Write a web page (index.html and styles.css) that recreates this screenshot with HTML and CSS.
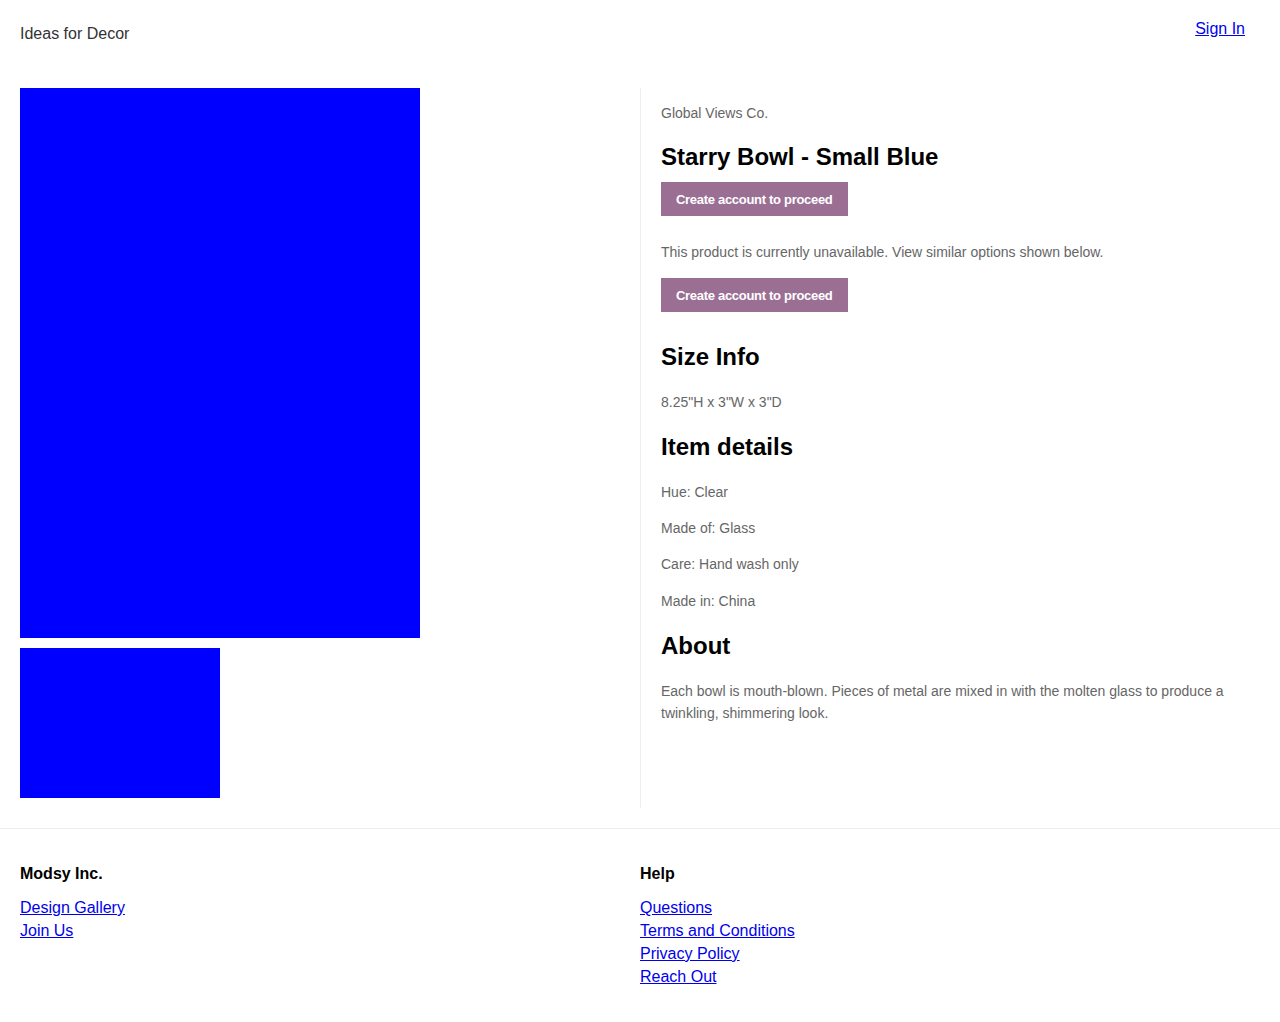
FILE: index.html
```html
<!DOCTYPE html>
<html lang="en">
<head>
<meta charset="utf-8">
<title>Starry Bowl - Small Blue</title>
<link rel="stylesheet" href="styles.css">
</head>
<body>
<header class="site-header">
  <div class="brand-name">Ideas for Decor</div>
  <a class="sign-in" href="#">Sign In</a>
</header>
<main class="product">
  <section class="gallery">
    <div class="main-image"></div>
    <div class="thumb"></div>
  </section>
  <section class="info">
    <p class="vendor">Global Views Co.</p>
    <h1 class="title">Starry Bowl - Small Blue</h1>
    <button class="cta">Create account to proceed</button>
    <p class="notice">This product is currently unavailable. View similar options shown below.</p>
    <button class="cta cta-second">Create account to proceed</button>
    <h2 class="section-title">Size Info</h2>
    <p class="detail">8.25"H x 3"W x 3"D</p>
    <h2 class="section-title">Item details</h2>
    <p class="detail">Hue: Clear</p>
    <p class="detail detail-tight">Made of: Glass</p>
    <p class="detail detail-tight">Care: Hand wash only</p>
    <p class="detail detail-last">Made in: China</p>
    <h2 class="section-title">About</h2>
    <p class="about">Each bowl is mouth-blown. Pieces of metal are mixed in with the molten glass to produce a twinkling, shimmering look.</p>
  </section>
</main>
<footer class="site-footer">
  <div class="footer-col">
    <h3 class="footer-title">Modsy Inc.</h3>
    <a href="#">Design Gallery</a>
    <a href="#">Join Us</a>
  </div>
  <div class="footer-col">
    <h3 class="footer-title">Help</h3>
    <a href="#">Questions</a>
    <a href="#">Terms and Conditions</a>
    <a href="#">Privacy Policy</a>
    <a href="#">Reach Out</a>
  </div>
</footer>
</body>
</html>
```
FILE: styles.css
```css
* { box-sizing: border-box; }
body {
  margin: 0;
  font-family: "Liberation Sans", Arial, sans-serif;
  background: #fff;
  color: #000;
}
a { color: #0000ee; }

.site-header {
  height: 68px;
  display: flex;
  justify-content: space-between;
  align-items: flex-start;
  padding: 0 35px 0 20px;
}
.brand-name {
  font-size: 16px;
  line-height: 18px;
  color: #333;
  margin-top: 25px;
}
.sign-in {
  font-size: 16px;
  line-height: 18px;
  margin-top: 20px;
}

.product {
  display: grid;
  grid-template-columns: 620px 620px;
  padding: 20px;
}
.gallery {
  display: flex;
  flex-direction: column;
  align-items: flex-start;
  gap: 10px;
  padding-bottom: 10px;
}
.main-image {
  width: 400px;
  height: 550px;
  background: #0000ff;
}
.thumb {
  width: 200px;
  height: 150px;
  background: #0000ff;
}
.info {
  border-left: 1px solid #eee;
  padding: 16px 20px 0 20px;
  display: flex;
  flex-direction: column;
  align-items: flex-start;
}
.vendor {
  font-size: 14px;
  line-height: 18px;
  color: #666;
  margin: 0;
}
.title {
  font-size: 24px;
  line-height: 28px;
  font-weight: bold;
  margin: 21px 0 11px;
}
.cta {
  height: 34px;
  padding: 0 15px;
  border: 0;
  background: #9b6f93;
  color: #fff;
  font-family: "Liberation Sans", Arial, sans-serif;
  font-size: 13px;
  font-weight: bold;
  letter-spacing: -0.3px;
  cursor: pointer;
}
.notice {
  font-size: 14px;
  line-height: 18px;
  color: #666;
  margin: 27px 0 17px;
}
.section-title {
  font-size: 24px;
  line-height: 28px;
  font-weight: bold;
  margin: 31px 0 0;
}
.detail {
  font-size: 14px;
  line-height: 18px;
  color: #666;
  margin: 22px 0 0;
}
.detail-tight { margin-top: 18px; }
.detail-last { margin-top: 19px; }
.detail + .section-title { margin-top: 22px; }
.about {
  font-size: 14px;
  line-height: 22px;
  color: #666;
  margin: 20px 0 0;
}

.site-footer {
  border-top: 1px solid #eee;
  display: grid;
  grid-template-columns: 620px 620px;
  padding: 36px 20px 35px;
}
.footer-col {
  display: flex;
  flex-direction: column;
  align-items: flex-start;
}
.footer-title {
  font-size: 16px;
  line-height: 18px;
  font-weight: bold;
  margin: 0 0 13px;
}
.footer-col a {
  font-size: 16px;
  line-height: 23px;
}
```
